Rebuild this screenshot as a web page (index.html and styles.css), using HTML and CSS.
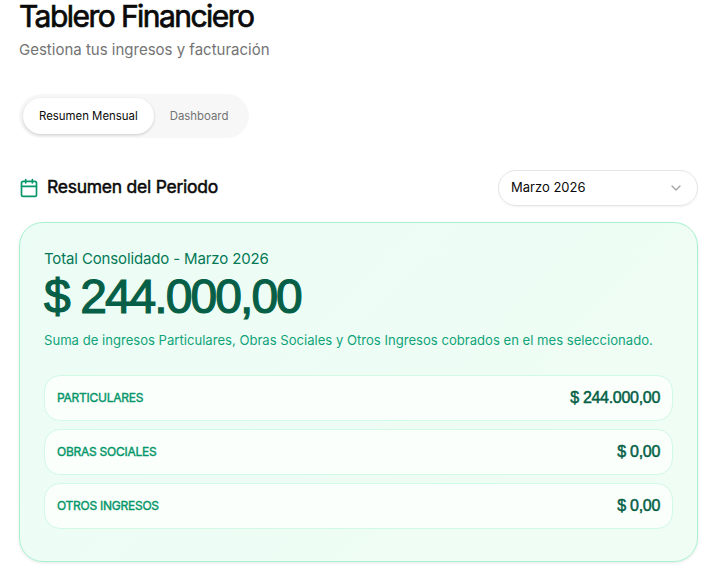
FILE: index.html
```html
<!DOCTYPE html>
<html lang="es">
<head>
    <meta charset="UTF-8">
    <meta name="viewport" content="width=device-width, initial-scale=1.0">
    <title>Tablero Financiero</title>
    <link rel="stylesheet" href="styles.css">
</head>
<body>

<header class="page-head">
    <h1>Tablero Financiero</h1>
    <p class="subtitle">Gestiona tus ingresos y facturación</p>
</header>

<div class="tabs">
    <button class="tab active">Resumen Mensual</button>
    <button class="tab">Dashboard</button>
</div>

<div class="period-row">
    <div class="period-title">
        <svg class="cal-icon" width="20" height="20" viewBox="0 0 24 24" fill="none" stroke="currentColor" stroke-width="2" stroke-linecap="round" stroke-linejoin="round">
            <path d="M8 2v4"/>
            <path d="M16 2v4"/>
            <rect x="3" y="4" width="18" height="18" rx="2"/>
            <path d="M3 10h18"/>
        </svg>
        <h2>Resumen del Periodo</h2>
    </div>
    <div class="select">
        <span>Marzo 2026</span>
        <svg width="16" height="16" viewBox="0 0 24 24" fill="none" stroke="currentColor" stroke-width="2" stroke-linecap="round" stroke-linejoin="round">
            <path d="m6 9 6 6 6-6"/>
        </svg>
    </div>
</div>

<section class="card">
    <p class="card-label">Total Consolidado - Marzo 2026</p>
    <p class="card-total">$ 244.000,00</p>
    <p class="card-note">Suma de ingresos Particulares, Obras Sociales y Otros Ingresos cobrados en el mes seleccionado.</p>

    <div class="rows">
        <div class="row">
            <span class="row-name">PARTICULARES</span>
            <span class="row-value">$ 244.000,00</span>
        </div>
        <div class="row">
            <span class="row-name">OBRAS SOCIALES</span>
            <span class="row-value">$ 0,00</span>
        </div>
        <div class="row">
            <span class="row-name">OTROS INGRESOS</span>
            <span class="row-value">$ 0,00</span>
        </div>
    </div>
</section>

</body>
</html>
```

FILE: styles.css
```css
* { margin: 0; padding: 0; box-sizing: border-box; }
body {
    font-family: "Inter", "Liberation Sans", sans-serif;
    background: #fff;
    color: #0a0a0a;
    padding: 1px 14px 7px 19px;
}
h1 {
    font-size: 30px;
    line-height: 30px;
    font-weight: 400;
    letter-spacing: -1.55px;
    -webkit-text-stroke: 0.7px #0a0a0a;
}
.subtitle {
    margin-top: 7px;
    font-size: 15px;
    line-height: 24px;
    color: #737373;
}
.tabs {
    display: inline-flex;
    margin-top: 32px;
    padding: 4px;
    background: #f7f7f7;
    border-radius: 22px;
}
.tab {
    height: 36px;
    padding: 0 16px;
    border: none;
    border-radius: 18px;
    background: transparent;
    font: inherit;
    font-size: 11.4px;
    color: #737373;
}
.tab + .tab { padding-right: 17px; padding-left: 16px; }
.tab.active {
    background: #fff;
    color: #0a0a0a;
    box-shadow: 0 1px 3px rgba(0,0,0,0.18);
}
.period-row {
    display: flex;
    justify-content: space-between;
    align-items: center;
    margin-top: 32px;
}
.period-title {
    display: flex;
    align-items: center;
    gap: 8px;
}
.cal-icon { color: #059669; }
h2 {
    font-size: 17.5px;
    line-height: 28px;
    font-weight: 400;
    letter-spacing: -0.25px;
    -webkit-text-stroke: 0.5px #0a0a0a;
    margin-top: -2px;
}
.select {
    display: flex;
    justify-content: space-between;
    align-items: center;
    width: 200px;
    height: 36px;
    padding: 0 13px 2px 12px;
    border: 1px solid #e5e5e5;
    border-radius: 18px;
    font-size: 13px;
    box-shadow: 0 1px 2px rgba(0,0,0,0.05);
}
.select svg { color: #a3a3a3; margin-top: 2px; }
.card {
    margin-top: 16px;
    padding: 26px 24px 32px;
    background: linear-gradient(135deg, #ecfdf5, #f0fdf4);
    border: 1px solid #a7f3d0;
    border-radius: 24px;
    box-shadow: 0 1px 3px rgba(0,0,0,0.1);
}
.card-label {
    font-size: 15px;
    line-height: 20px;
    letter-spacing: -0.14px;
    color: #047857;
}
.card-total {
    margin-top: 4px;
    font-family: "Liberation Sans", sans-serif;
    font-size: 48px;
    line-height: 48px;
    font-weight: 400;
    letter-spacing: -1.95px;
    color: #065f46;
    -webkit-text-stroke: 1.2px #065f46;
}
.card-note {
    margin-top: 9px;
    margin-bottom: 25px;
    font-size: 13.1px;
    line-height: 20px;
    color: #10a37a;
}
.rows {
    display: flex;
    flex-direction: column;
    gap: 8px;
}
.row {
    display: flex;
    justify-content: space-between;
    align-items: center;
    height: 46px;
    padding: 0 12px;
    background: rgba(255,255,255,0.7);
    border: 1px solid #d1fae5;
    border-radius: 16px;
}
.row-name {
    font-size: 12px;
    line-height: 16px;
    font-weight: 400;
    letter-spacing: -0.25px;
    color: #059669;
    -webkit-text-stroke: 0.4px #059669;
    margin-top: -1px;
}
.row-value {
    font-family: "Liberation Sans", sans-serif;
    font-size: 16px;
    font-weight: 400;
    letter-spacing: -0.3px;
    color: #065f46;
    -webkit-text-stroke: 0.5px #065f46;
}
```
